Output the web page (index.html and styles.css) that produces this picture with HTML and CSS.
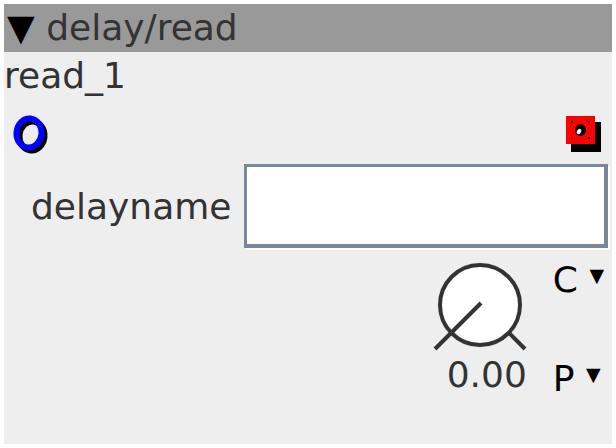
FILE: index.html
```
<!doctype html>
<html lang="en">

<head>
    <meta charset="UTF-8" />
    <meta name="viewport" content="width=device-width, initial-scale=1.0" />
    <title>delay/read</title>
    <link rel="stylesheet" href="styles.css">
</head>

<body>
    <div class="panel">
        <div class="panel-header"><span class="caret">▼</span> delay/read</div>
        <div class="instance-name">read_1</div>
        <div class="ports">
            <svg class="port-in" width="38" height="42" viewBox="0 0 38 42">
                <ellipse cx="19" cy="22" rx="12.5" ry="14.5" transform="rotate(6 19 22)" fill="none" stroke="#000" stroke-width="6" />
                <ellipse cx="16" cy="19" rx="12.5" ry="14.5" transform="rotate(6 16 19)" fill="none" stroke="#0000ff" stroke-width="6" />
            </svg>
            <svg class="port-out" width="38" height="40" viewBox="0 0 38 40">
                <rect x="7" y="8" width="30" height="30" fill="#000" />
                <rect x="2" y="2" width="29" height="28" fill="#ff0000" />
                <g fill="#000">
                    <rect x="7" y="7" width="2" height="2" />
                    <rect x="24" y="7" width="2" height="2" />
                    <rect x="7" y="23" width="2" height="2" />
                    <rect x="24" y="23" width="2" height="2" />
                </g>
                <ellipse cx="16.5" cy="16" rx="5.5" ry="6" fill="#000" />
                <ellipse cx="15" cy="17.5" rx="2" ry="2.8" transform="rotate(35 15 17.5)" fill="#fff" />
            </svg>
        </div>
        <div class="param-row">
            <label class="param-label" for="delayname">delayname</label>
            <input class="param-entry" type="text" id="delayname" />
        </div>
        <div class="controls">
            <div class="knob-group">
                <svg class="knob" width="94" height="92" viewBox="0 0 94 92">
                    <circle cx="47" cy="45" r="40" fill="#fff" stroke="#333" stroke-width="4" />
                    <line x1="48" y1="43" x2="2" y2="89" stroke="#333" stroke-width="4" />
                    <line x1="75" y1="72" x2="92" y2="89" stroke="#333" stroke-width="4" />
                </svg>
                <div class="knob-value">0.00</div>
            </div>
            <div class="modes">
                <div class="mode">C <span class="mode-caret">▼</span></div>
                <div class="mode mode-p">P <span class="mode-caret">▼</span></div>
            </div>
        </div>
    </div>
</body>

</html>
```

FILE: styles.css
```
body {
    margin: 4px;
    background: #fff;
    font-family: "DejaVu Sans", sans-serif;
    font-size: 36px;
    color: #333;
}

.panel {
    width: 608px;
    height: 440px;
    background: #eeeeee;
    display: flex;
    flex-direction: column;
}

.panel-header {
    height: 48px;
    line-height: 48px;
    background: #999999;
    padding-left: 3px;
    white-space: nowrap;
}

.caret {
    color: #000;
}

.instance-name {
    height: 48px;
    line-height: 48px;
}

.ports {
    height: 62px;
    display: flex;
    justify-content: space-between;
    align-items: flex-start;
    padding: 14px 10px 0 9px;
    box-sizing: border-box;
}

.param-row {
    height: 88px;
    display: flex;
    align-items: center;
    padding: 0 4px 0 27px;
}

.param-label {
    flex: none;
    width: 213px;
}

.param-entry {
    flex: 1;
    width: 0;
    min-width: 0;
    height: 84px;
    box-sizing: border-box;
    margin: 0;
    padding: 0 8px;
    background: #fff;
    border-style: solid;
    border-color: #7a8794;
    border-width: 3px 4px 4px 3px;
    box-shadow: 2px 2px 0 #fff;
    font: inherit;
    outline: none;
}

.controls {
    display: flex;
    justify-content: flex-end;
    padding-right: 8px;
}

.knob-group {
    display: flex;
    flex-direction: column;
    align-items: center;
    padding-top: 10px;
}

.knob {
    display: block;
}

.knob-value {
    line-height: 40px;
    margin-top: 3px;
    padding-left: 14px;
}

.modes {
    margin-left: 26px;
    padding-top: 5px;
    color: #000;
}

.mode {
    line-height: 40px;
    white-space: nowrap;
}

.mode-p {
    margin-top: 54px;
}

.mode-caret {
    font-size: 19px;
    vertical-align: 10px;
}
```
